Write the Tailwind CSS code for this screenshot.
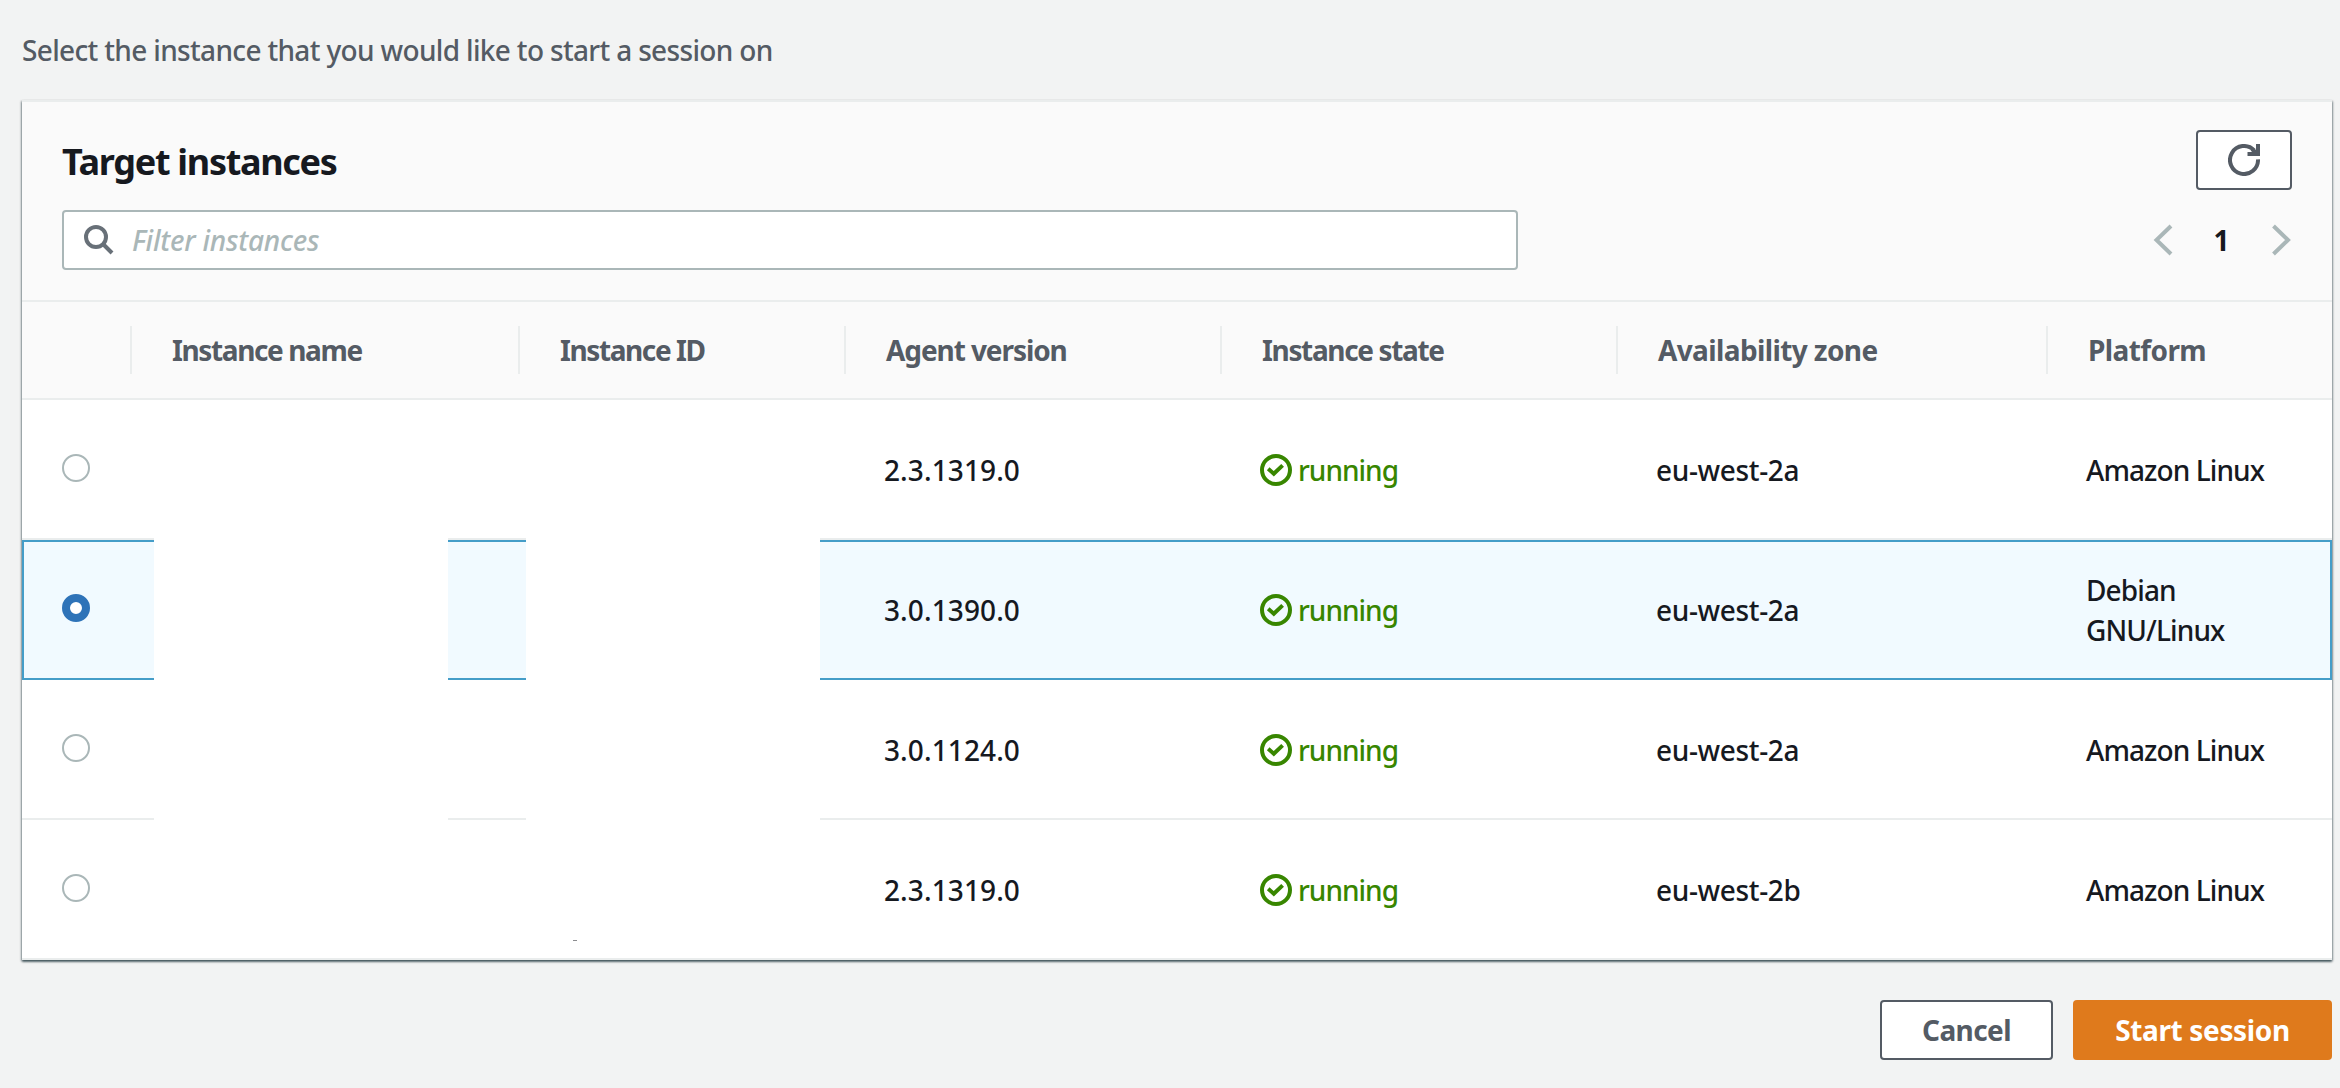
<!DOCTYPE html>
<html lang="en">
<head>
<meta charset="utf-8">
<title>Start a session</title>
<script src="https://cdn.jsdelivr.net/npm/@tailwindcss/browser@4"></script>
</head>
<body class="flex h-[1088px] w-[2340px] flex-col overflow-hidden bg-[#f2f3f3] pl-[22px] pr-2 font-['Noto_Sans','Open_Sans',sans-serif] text-[28px] leading-[40px] text-[#16191f]">
<svg class="hidden">
  <symbol id="ok" viewBox="0 0 32 32"><circle cx="16" cy="16" r="14" fill="none" stroke="#388600" stroke-width="4"/><path d="M8.200 14.800l5.600 4.900 8.800-8.300" fill="none" stroke="#388600" stroke-width="4"/></symbol>
</svg>

<p class="h-[100px] pt-[30px] font-medium tracking-[-0.66px] text-[#545b64]">Select the instance that you would like to start a session on</p>

<main class="flex h-[860px] flex-col border-t-2 border-[#eaeded] bg-white shadow-[0_2px_2px_0_rgba(0,28,36,0.5),1px_1px_2px_0_rgba(0,28,36,0.3),-1px_1px_2px_0_rgba(0,28,36,0.3)]">
  <header class="flex h-[200px] flex-col gap-5 border-b-2 border-[#eaeded] bg-[#fafafa] px-10 pt-7">
    <div class="flex h-[60px] items-center justify-between">
      <h1 class="pt-[3px] text-[36px] font-bold tracking-[-1.3px]">Target instances</h1>
      <button class="flex h-[60px] w-24 items-center justify-center rounded-[4px] border-2 border-[#545b64] bg-white">
        <svg class="h-8 w-8" viewBox="0 0 32 32" fill="none" stroke="#545b64" stroke-width="4"><path d="M30 15.300a14 14 0 1 1-3.800-8.900M30 0v10H19.500M24 5l5 5"/></svg>
      </button>
    </div>
    <div class="flex h-[60px] items-center justify-between">
      <div class="flex h-[60px] w-[1456px] items-center rounded-[4px] border-2 border-[#aab7b8] bg-white pl-5">
        <svg class="h-[30px] w-[30px]" viewBox="0 0 30 30" fill="none" stroke="#687078" stroke-width="4"><circle cx="12" cy="12" r="10"/><path d="M19 19l9 9"/></svg>
        <span class="pl-[18px] font-medium italic tracking-[-0.22px] text-[#aab7b8]">Filter instances</span>
      </div>
      <nav class="flex items-center">
        <svg class="h-8 w-5" viewBox="0 0 20 32" fill="none" stroke="#aab7b8" stroke-width="4"><path d="M18 2L3.500 16 18 30"/></svg>
        <span class="w-[99px] pr-[2px] text-center font-bold">1</span>
        <svg class="h-8 w-5" viewBox="0 0 20 32" fill="none" stroke="#aab7b8" stroke-width="4"><path d="M1.500 2L16 16 1.500 30"/></svg>
      </nav>
    </div>
  </header>

  <div class="grid h-[98px] grid-cols-[110px_388px_326px_376px_396px_430px_284px] items-center border-b-2 border-[#eaeded] bg-[#fafafa] font-bold text-[#545b64]">
    <div class="h-12 border-r-2 border-[#eaeded]"></div>
    <div class="h-12 border-r-2 border-[#eaeded] pl-10 pt-1 tracking-[-1.38px]">Instance name</div>
    <div class="h-12 border-r-2 border-[#eaeded] pl-10 pt-1 tracking-[-1.4px]">Instance ID</div>
    <div class="h-12 border-r-2 border-[#eaeded] pl-10 pt-1 tracking-[-1.08px]">Agent version</div>
    <div class="h-12 border-r-2 border-[#eaeded] pl-10 pt-1 tracking-[-1.35px]">Instance state</div>
    <div class="h-12 border-r-2 border-[#eaeded] pl-10 pt-1 tracking-[-0.62px]">Availability zone</div>
    <div class="h-12 pl-10 pt-1 tracking-[-0.6px]">Platform</div>
  </div>

  <div class="grid h-[138px] grid-cols-[132px_294px_78px_294px_64px_376px_396px_430px_246px] items-center font-medium">
    <i class="-mt-0.5 ml-10 block h-7 w-7 rounded-full border-2 border-[#aab7b8] bg-white"></i>
    <span></span><span></span><span></span><span></span>
    <span class="pt-0.5 tracking-[0.1px]">2.3.1319.0</span>
    <span class="flex items-center gap-[6px] pt-0.5 tracking-[-1px] text-[#388600]"><svg class="h-8 w-8"><use href="#ok"/></svg>running</span>
    <span class="pt-0.5 tracking-[-0.35px]">eu-west-2a</span>
    <span class="pt-0.5 tracking-[-0.92px]">Amazon Linux</span>
  </div>

  <div class="relative grid h-[142px] grid-cols-[132px_294px_78px_294px_64px_376px_396px_430px_246px] items-center border-t-2 border-[#eaeded] bg-[#f1faff] pb-0.5 font-medium">
    <i class="-mt-0.5 ml-10 block h-7 w-7 rounded-full border-8 border-[#2e73b8] bg-white"></i>
    <span></span><span></span><span></span><span></span>
    <span class="pt-0.5 tracking-[0.1px]">3.0.1390.0</span>
    <span class="flex items-center gap-[6px] pt-0.5 tracking-[-1px] text-[#388600]"><svg class="h-8 w-8"><use href="#ok"/></svg>running</span>
    <span class="pt-0.5 tracking-[-0.35px]">eu-west-2a</span>
    <span class="pt-0.5 tracking-[-0.88px]">Debian<br>GNU/Linux</span>
    <div class="absolute inset-0 border-2 border-[#449dc8]"></div>
    <div class="absolute -top-0.5 left-[132px] h-[142px] w-[294px] bg-white"></div>
    <div class="absolute -top-0.5 left-[504px] h-[142px] w-[294px] bg-white"></div>
  </div>

  <div class="relative grid h-[140px] grid-cols-[132px_294px_78px_294px_64px_376px_396px_430px_246px] items-center border-b-2 border-[#eaeded] font-medium">
    <i class="-mt-0.5 ml-10 block h-7 w-7 rounded-full border-2 border-[#aab7b8] bg-white"></i>
    <span></span><span></span><span></span><span></span>
    <span class="pt-0.5 tracking-[0.1px]">3.0.1124.0</span>
    <span class="flex items-center gap-[6px] pt-0.5 tracking-[-1px] text-[#388600]"><svg class="h-8 w-8"><use href="#ok"/></svg>running</span>
    <span class="pt-0.5 tracking-[-0.35px]">eu-west-2a</span>
    <span class="pt-0.5 tracking-[-0.92px]">Amazon Linux</span>
    <div class="absolute -bottom-0.5 left-[132px] h-1 w-[294px] bg-white"></div>
    <div class="absolute -bottom-0.5 left-[504px] h-1 w-[294px] bg-white"></div>
  </div>

  <div class="relative grid h-[140px] grid-cols-[132px_294px_78px_294px_64px_376px_396px_430px_246px] items-center border-b-2 border-[#eaeded] font-medium">
    <i class="-mt-0.5 ml-10 block h-7 w-7 rounded-full border-2 border-[#aab7b8] bg-white"></i>
    <span></span><span></span><span></span><span></span>
    <span class="pt-0.5 tracking-[0.1px]">2.3.1319.0</span>
    <span class="flex items-center gap-[6px] pt-0.5 tracking-[-1px] text-[#388600]"><svg class="h-8 w-8"><use href="#ok"/></svg>running</span>
    <span class="pt-0.5 tracking-[-0.35px]">eu-west-2b</span>
    <span class="pt-0.5 tracking-[-0.92px]">Amazon Linux</span>
    <div class="absolute left-[551px] top-[120px] h-px w-1 bg-[#8b8c8f]"></div>
  </div>
</main>

<footer class="flex justify-end gap-5 pt-10 font-bold">
  <button class="h-[60px] w-[173px] rounded-[4px] border-2 border-[#545b64] bg-white tracking-[-0.6px] text-[#545b64]">Cancel</button>
  <button class="h-[60px] w-[259px] rounded-[4px] bg-[#df7a1c] tracking-[-0.35px] text-white">Start session</button>
</footer>
</body>
</html>
